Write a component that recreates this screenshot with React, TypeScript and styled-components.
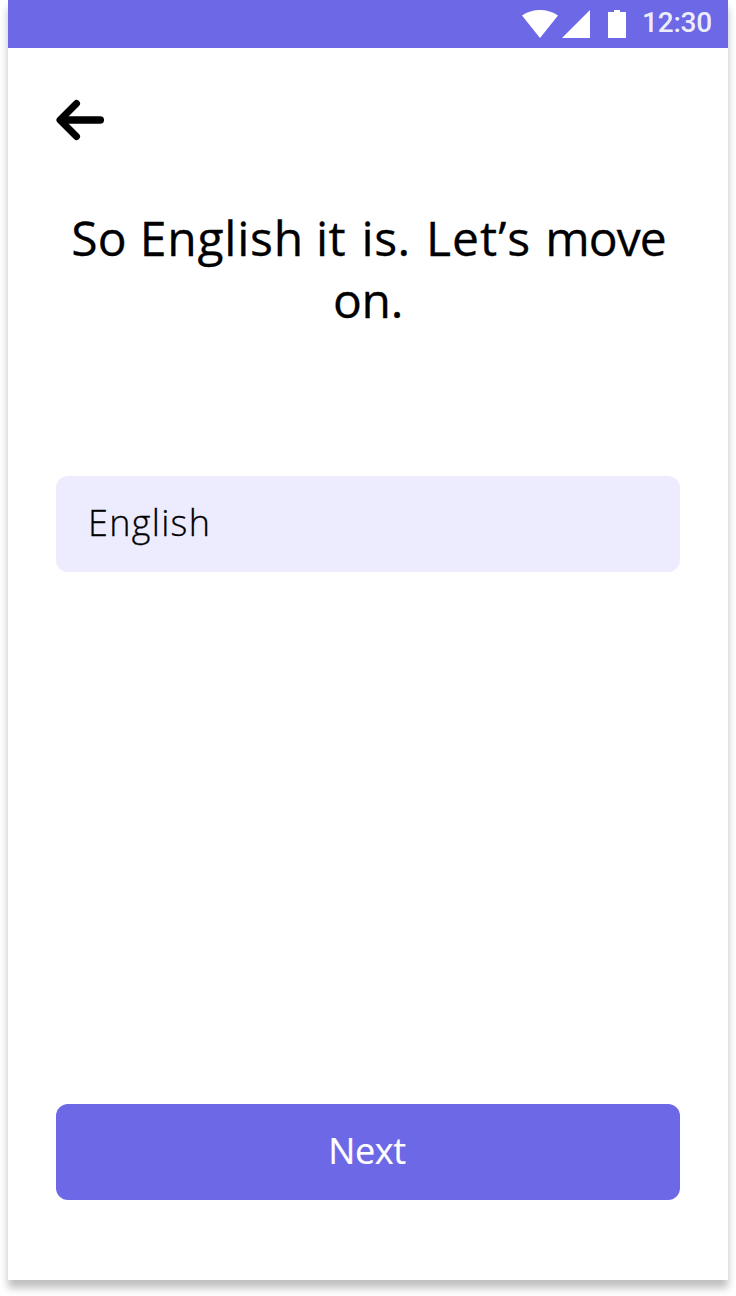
import React from "react";
import styled, { createGlobalStyle } from "styled-components";

const GlobalStyle = createGlobalStyle`
  *, *::before, *::after { box-sizing: border-box; }
  body { margin: 0; background: #fff; overflow: hidden; }
`;

const Stage = styled.div`
  height: 1296px;
  padding: 0 8px 16px;
  overflow: hidden;
`;

const Screen = styled.main`
  display: flex;
  flex-direction: column;
  height: 1280px;
  background: #fff;
  box-shadow: 0 8px 8px rgba(0, 0, 0, 0.25);
  font-family: "Open Sans", "Noto Sans", sans-serif;
  color: #000;
`;

const StatusBar = styled.header`
  display: flex;
  align-items: center;
  justify-content: flex-end;
  height: 48px;
  padding-right: 16px;
  background: #6c68e6;
`;

const StatusIcons = styled.svg`
  display: block;
  width: 104px;
  height: 48px;
  margin-right: 14px;
`;

const Clock = styled.time`
  width: 72px;
  height: 48px;
  font: 500 28px/46px Roboto, sans-serif;
  letter-spacing: -0.2px;
  text-align: right;
  white-space: nowrap;
  color: rgba(255, 255, 255, 0.9);
`;

const Content = styled.section`
  display: flex;
  flex: 1;
  flex-direction: column;
  padding: 48px 48px 80px;
`;

const BackButton = styled.button`
  width: 48px;
  height: 48px;
  padding: 0;
  border: 0;
  background: none;
  svg { display: block; }
`;

const Title = styled.h1`
  margin: 63px 0 0;
  font-size: 48px;
  font-weight: 400;
  -webkit-text-stroke: 0.3px #000;
  line-height: 62px;
  text-align: center;
  white-space: nowrap;
`;

const TitleLine = styled.span<{ $inset?: number }>`
  display: block;
  padding-left: ${(p) => p.$inset ?? 0}px;
  letter-spacing: 0.6px;
`;

const Word = styled.span<{ $spacing?: number; $shift?: number }>`
  margin-left: ${(p) => p.$shift ?? 0}px;
  letter-spacing: ${(p) => p.$spacing ?? 0.6}px;
`;

const Choice = styled.div`
  display: flex;
  align-items: center;
  height: 96px;
  margin-top: 145px;
  padding: 0 32px 3px;
  border-radius: 12px;
  background: #edecfe;
  font-size: 36px;
  font-weight: 300;
  letter-spacing: 1.3px;
  -webkit-text-stroke: 0.3px #000;
`;

const NextButton = styled.button`
  height: 96px;
  margin-top: auto;
  padding: 0 2px 3px 0;
  border: 0;
  border-radius: 12px;
  background: #6c68e6;
  color: #fff;
  font: 400 36px "Open Sans", "Noto Sans", sans-serif;
  letter-spacing: -0.4px;
  -webkit-text-stroke: 0.2px #fff;
`;

export default function App() {
  return (
    <Stage>
      <GlobalStyle />
      <Screen>
        <StatusBar>
          <StatusIcons viewBox="522 0 104 48" fill="#fff" aria-hidden="true">
            <path d="M540 38 L522 15.5 Q530 10 540 10 T558 15.5Z" />
            <path d="M562 38 L590 10 V38Z" />
            <path d="M608 12h6v-2h6v2h6v26h-18Z" />
          </StatusIcons>
          <Clock>12:30</Clock>
        </StatusBar>
        <Content>
          <BackButton aria-label="Back">
            <svg width="48" height="48" viewBox="0 0 48 48" fill="none" stroke="#000" strokeLinecap="round" strokeLinejoin="round">
              <path d="M20.5 7.5 L4 24 L20.5 40.5" strokeWidth="7" />
              <path d="M6 24 H44.3" strokeWidth="7.5" />
            </svg>
          </BackButton>
          <Title>
            <TitleLine $inset={1}>
              <Word $spacing={0.2}>So</Word> <Word $spacing={0.75}>English</Word>{" "}
              <Word $shift={-1}>it</Word> <Word $shift={2}>is.</Word>{" "}
              <Word $spacing={1.05} $shift={2}>Let’s</Word>{" "}
              <Word $spacing={-0.9} $shift={0.8}>move</Word>
            </TitleLine>
            <TitleLine>
              <Word $spacing={-0.3}>on.</Word>
            </TitleLine>
          </Title>
          <Choice>English</Choice>
          <NextButton>Next</NextButton>
        </Content>
      </Screen>
    </Stage>
  );
}
